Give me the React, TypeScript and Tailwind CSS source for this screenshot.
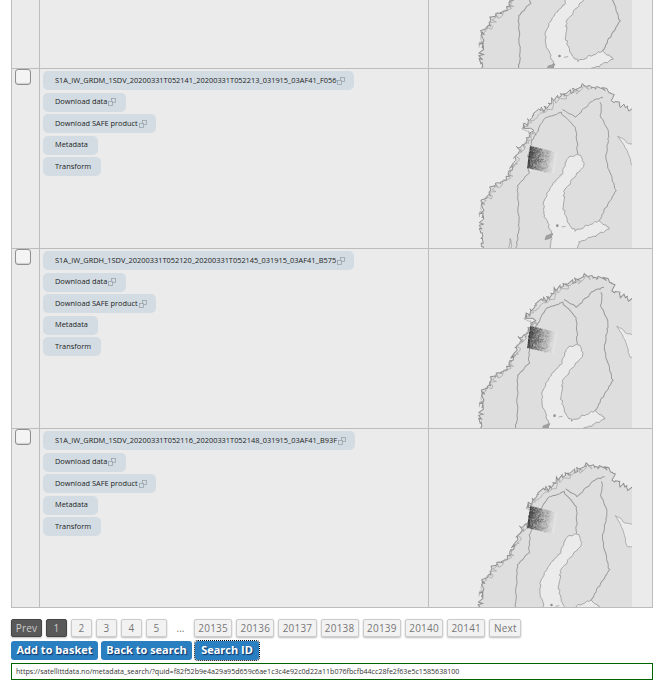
import React from 'react';

const FONT = 'font-["Open_Sans",sans-serif]';

type Pt = [number, number];

// small seeded generator so the map stays the same on every render
function rng(seed: number) {
  let s = seed;
  return () => {
    s = (s * 16807) % 2147483647;
    return (s - 1) / 2147483646;
  };
}

function rough(points: Pt[], amp: number, seed: number, step = 9): Pt[] {
  const r = rng(seed);
  const out: Pt[] = [];
  for (let i = 0; i < points.length - 1; i++) {
    const [x0, y0] = points[i];
    const [x1, y1] = points[i + 1];
    const n = Math.max(1, Math.round(Math.hypot(x1 - x0, y1 - y0) / step));
    for (let k = 0; k < n; k++) {
      const t = k / n;
      out.push([x0 + (x1 - x0) * t + (r() - 0.5) * amp, y0 + (y1 - y0) * t + (r() - 0.5) * amp]);
    }
  }
  out.push(points[points.length - 1]);
  return out;
}

const d = (pts: Pt[], close = false) =>
  'M' + pts.map((p) => p[0].toFixed(1) + ' ' + p[1].toFixed(1)).join('L') + (close ? 'Z' : '');

const COAST_PTS: Pt[] = [[165, 560], [160, 500], [155, 430], [160, 395], [185, 365], [210, 340], [235, 320], [250, 285], [270, 240], [300, 205], [310, 185], [282, 172], [320, 130], [350, 115], [375, 88], [430, 65], [470, 48], [510, 55], [545, 72], [560, 100], [600, 120], [740, 150]];
const COAST = rough(COAST_PTS, 16, 11, 6);
const LAND = d([...COAST, [740, 640], [165, 640]], true);
const COAST_LINE = d(COAST);
// skerries just off the coast
const SKERRIES = d(rough(COAST_PTS.slice(2, 17).map(([x, y]) => [x + 5, y + 6] as Pt), 18, 53, 5));

const GULF = d(
  rough(
    [[350, 640], [368, 490], [345, 440], [345, 390], [372, 345], [402, 310], [415, 265], [450, 255], [466, 285], [440, 322], [405, 360], [404, 420], [420, 470], [440, 485], [510, 455], [540, 480], [500, 500], [450, 520], [420, 640]],
    6,
    23,
    6
  ),
  true
);
const FJORD = d(rough([[215, 640], [245, 510], [258, 640]], 6, 31, 6), true);
const WHITE_SEA = d(rough([[568, 200], [600, 225], [740, 240], [740, 295], [612, 295], [600, 262], [585, 228]], 4, 37), true);

const BORDERS = [
  [[250, 640], [270, 470], [265, 350], [300, 312], [297, 260], [310, 215], [345, 150], [395, 130], [440, 175], [447, 255]],
  [[402, 122], [440, 145], [490, 95], [522, 85]],
  [[515, 100], [515, 140], [540, 190], [530, 270], [560, 365], [510, 455]],
].map((line) => d(rough(line as Pt[], 4, 41, 7)));

// noisy specks of the SAR footprint, dark on the left and fading to the right
function makeSwath() {
  const r = rng(77);
  const out: { x: number; y: number; o: number }[] = [];
  for (let i = 0; i < 900; i++) {
    const u = Math.pow(r(), 1.4);
    const v = r();
    const x = 303 + u * 80 - v * 9;
    const y = 230 + u * 20 + v * 65;
    out.push({ x, y, o: Math.pow(1 - u, 1.5) * 0.5 });
  }
  return out;
}
const SWATH = makeSwath();

function MapThumb({ height, matrix, swath, id }: { height: number; matrix: string; swath?: boolean; id: string }) {
  return (
    <svg width="203" height={height} viewBox={`0 0 609 ${height * 3}`} className="block shrink-0">
      <defs>
        <filter id={`soft-${id}`} x="-5%" y="-5%" width="110%" height="110%">
          <feGaussianBlur stdDeviation="1.2" />
        </filter>
        <linearGradient id={`fade-${id}`} x1="0" y1="0" x2="1" y2="0.2">
          <stop offset="0" stopColor="#8a8a8a" />
          <stop offset="0.55" stopColor="#bdbdbd" />
          <stop offset="1" stopColor="#e4e4e4" />
        </linearGradient>
      </defs>
      <g filter={`url(#soft-${id})`}>
        <g transform={`matrix(${matrix})`}>
          <path d={LAND} fill="#dedede" />
          <path d={GULF} fill="#ebebeb" stroke="#9a9a9a" strokeWidth="2.5" />
          <path d={FJORD} fill="#ebebeb" stroke="#9a9a9a" strokeWidth="2.5" />
          <path d={WHITE_SEA} fill="#ebebeb" stroke="#a5a5a5" strokeWidth="2.5" />
          <path d={COAST_LINE} fill="none" stroke="#8f8f8f" strokeWidth="3" />
          <path d={SKERRIES} fill="none" stroke="#a0a0a0" strokeWidth="2" />
          {BORDERS.map((b, i) => (
            <path key={i} d={b} fill="none" stroke="#9a9a9a" strokeWidth="3" />
          ))}
          <circle cx="385" cy="470" r="4" fill="#8f8f8f" />
          <path d="M398 474l12-2M352 500l20-6-8 14-16 4z" fill="#a0a0a0" stroke="#8f8f8f" strokeWidth="2" />
        </g>
        {swath && (
          <>
            <path d="M304 230L385 250L375 315L295 295Z" fill={`url(#fade-${id})`} />
            {SWATH.map((p, i) => (
              <rect key={i} x={p.x} y={p.y} width="3" height="3" fill="#3d3d3d" opacity={p.o} />
            ))}
          </>
        )}
      </g>
    </svg>
  );
}

function ExtIcon() {
  return (
    <svg width="8" height="8" viewBox="0 0 8 8" className="ml-[1px] inline-block shrink-0" fill="none" stroke="#9aa3aa" strokeWidth="0.8">
      <rect x="3.4" y="0.5" width="4" height="4" />
      <rect x="0.5" y="3.4" width="4" height="4" fill="#d3dce3" />
    </svg>
  );
}

function LinkPill({ label, ext, w }: { label: string; ext?: boolean; w: string }) {
  return (
    <a className={`flex h-[19px] items-center rounded-[5px] bg-[#d3dce3] pl-[12px] text-[7.4px] font-medium whitespace-nowrap text-[#222222] ${w}`}>
      {label}
      {ext && <ExtIcon />}
    </a>
  );
}

function Row({ name, nameW, height, matrix, id }: { name: string; nameW: string; height: number; matrix: string; id: string }) {
  return (
    <div className="flex border-b border-[#bcbcbc]" style={{ height }}>
      <div className="w-[28px] shrink-0 border-r border-[#bcbcbc] pl-[3px]">
        <div className="h-[16px] w-[16px] rounded-[3px] border border-[#8f8f8f] bg-[#f4f4f4] shadow-[inset_0_-1px_1px_#cfcfcf]" />
      </div>
      <div className="flex w-[389px] shrink-0 flex-col items-start gap-[2.5px] border-r border-[#bcbcbc] pt-[2px] pl-[3px]">
        <LinkPill label={name} ext w={nameW} />
        <LinkPill label="Download data" ext w="w-[83px]" />
        <LinkPill label="Download SAFE product" ext w="w-[113px]" />
        <LinkPill label="Metadata" w="w-[55px]" />
        <LinkPill label="Transform" w="w-[58px]" />
      </div>
      <MapThumb id={id} height={height - 1} matrix={matrix} swath />
    </div>
  );
}

const PAGES = ['20135', '20136', '20137', '20138', '20139', '20140', '20141'];

function PageBtn({ label, dark, w }: { label: string; dark?: boolean; w: string }) {
  return (
    <span
      className={`flex h-[18px] items-center justify-center rounded-[2px] border text-[10px] tracking-[0.2px] shadow-[0_1px_2px_#bbbbbb] ${w} ${
        dark ? 'border-[#444444] bg-[#595959] text-[#cccccc]' : 'border-[#cccccc] bg-[#f2f2f2] text-[#777777]'
      }`}
    >
      {label}
    </span>
  );
}

function BlueBtn({ label, w, focus }: { label: string; w: string; focus?: boolean }) {
  return (
    <button
      className={`flex h-[19px] items-center justify-center rounded-[3px] bg-[#2a7fc1] text-[11px] font-bold text-white [text-shadow:1px_1px_1px_#0b2f66] ${w} ${
        focus ? 'outline-1 outline-offset-0 outline-black outline-dotted' : ''
      }`}
    >
      {label}
    </button>
  );
}

export default function App() {
  return (
    <div className={`h-[687px] w-[664px] overflow-hidden bg-white ${FONT}`}>
      <div className="mr-[11px] ml-[11px] border-x border-[#bcbcbc] bg-[#ebebeb]">
        <div className="flex h-[69px] border-b border-[#bcbcbc]">
          <div className="w-[28px] shrink-0 border-r border-[#bcbcbc]" />
          <div className="w-[389px] shrink-0 border-r border-[#bcbcbc]" />
          <MapThumb id="r1" height={68} matrix="1.03 0 0 1 -5 -302" />
        </div>
        <Row id="r2" name="S1A_IW_GRDM_1SDV_20200331T052141_20200331T052213_031915_03AF41_F056" nameW="w-[311px]" height={180} matrix="1 0 0 1 0 0" />
        <Row id="r3" name="S1A_IW_GRDH_1SDV_20200331T052120_20200331T052145_031915_03AF41_B575" nameW="w-[311px]" height={180} matrix="0.97 0 -0.04 1 22 30" />
        <Row id="r4" name="S1A_IW_GRDM_1SDV_20200331T052116_20200331T052148_031915_03AF41_B93F" nameW="w-[312px]" height={179} matrix="0.938 0 -0.08 1 44 58" />
      </div>

      <div className="mt-[11px] ml-[11px] flex items-center gap-[4px]">
        <PageBtn label="Prev" dark w="w-[31px]" />
        <PageBtn label="1" dark w="w-[21px]" />
        {['2', '3', '4', '5'].map((p) => (
          <PageBtn key={p} label={p} w="w-[21px]" />
        ))}
        <span className="w-[19px] text-center text-[10px] text-[#777777]">...</span>
        {PAGES.map((p) => (
          <PageBtn key={p} label={p} w="w-[38.2px]" />
        ))}
        <PageBtn label="Next" w="w-[32px]" />
      </div>

      <div className="mt-[4px] ml-[11px] flex gap-[3px]">
        <BlueBtn label="Add to basket" w="w-[87px]" />
        <BlueBtn label="Back to search" w="w-[91px]" />
        <BlueBtn label="Search ID" w="w-[64px]" focus />
      </div>

      <div className="mt-[3px] ml-[11px] flex h-[17px] w-[642px] items-center border border-[#006400] bg-white pl-[4px] text-[7.1px] text-[#333333]">
        https://satellittdata.no/metadata_search/?quid=f82f52b9e4a29a95d659c6ae1c3c4e92c0d22a11b076fbcfb44cc28fe2f63e5c1585638100
      </div>
    </div>
  );
}
